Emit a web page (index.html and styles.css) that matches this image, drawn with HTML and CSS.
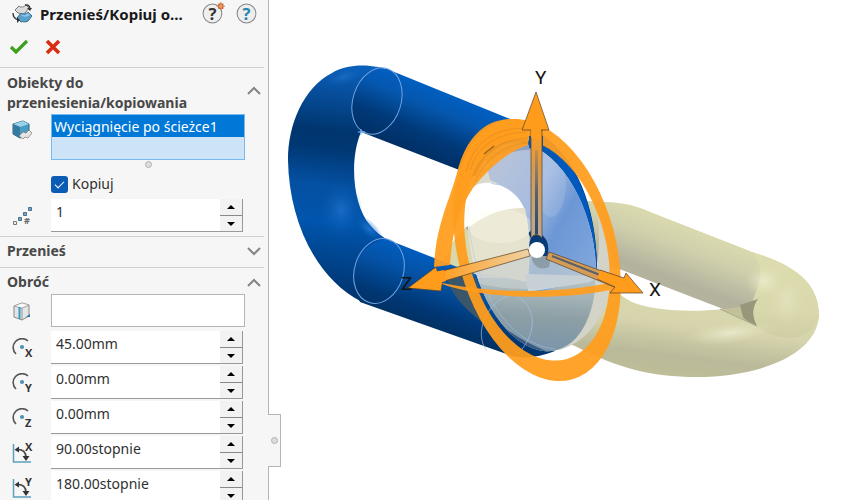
FILE: index.html
```
<!DOCTYPE html>
<html lang="pl">
<head>
<meta charset="utf-8">
<meta name="viewport" content="width=device-width, initial-scale=1">
<title>Przenieś/Kopiuj obiekty</title>
<link rel="stylesheet" href="styles.css">
</head>
<body>
<svg width="0" height="0" class="defs" aria-hidden="true">
  <symbol id="up" viewBox="0 0 10 6"><path d="M1 5L5 1l4 4z"/></symbol>
  <symbol id="down" viewBox="0 0 10 6"><path d="M1 1l4 4 4-4z"/></symbol>
  <symbol id="chevron" viewBox="0 0 14 9"><path d="M1 8l6-6 6 6" fill="none" stroke="#858585" stroke-width="2"/></symbol>
  <symbol id="arc" viewBox="0 0 20 20">
    <path d="M4 16A8 8 0 0 1 16 3" fill="none" stroke="#555" stroke-width="1.6"/>
    <circle cx="10" cy="9" r="2.1" fill="#4e90b6"/>
  </symbol>
  <symbol id="angle" viewBox="0 0 20 20">
    <path d="M1.5 1v18H19" fill="none" stroke="#5c9fc0" stroke-width="1.5"/>
    <path d="M5 6.5c6-.6 9 3 9 8" fill="none" stroke="#444" stroke-width="1.6"/>
    <path d="M2.5 6.7L7 3.5v6zM10.500 13h7L14 18z" fill="#333"/>
  </symbol>
</svg>
<div class="app">
  <aside class="panel">
    <header class="title-row">
      <svg class="icon" viewBox="0 0 20 20">
        <path d="M3 6l4-4c2 2 5 1 7-1l3 3-4 5c-3 2-5 0-7 0z" fill="#dcdcdc" stroke="#777"/>
        <path d="M5 14l4-5c2 2 5 1 7-1l4 4-4 5c-3 2-5 0-7 1z" fill="#58a1cd" stroke="#39708f"/>
        <path d="M9 10c3 2 5 1 7-1l2 2c-3 2-5 2-8 1z" fill="#8ac5e5"/>
        <path d="M13 1q4-1 5 3M1 9q0 5 5 7" fill="none" stroke="#333" stroke-width="1.300"/>
        <path d="M15 4h5l-2 3zM5 13v6l3-3z" fill="#333"/>
      </svg>
      <h1>Przenieś/Kopiuj o...</h1>
      <button class="help" aria-label="Co nowego">
        <svg viewBox="0 0 22 22"><circle cx="10" cy="11" r="9" fill="#efefef" stroke="#888"/><text x="10" y="17" class="mark">?</text><rect x="16" y="2" width="4" height="4" fill="#eda06d" stroke="#bd5a22"/><path d="M18 0v2m0 4v2m-4-4h2m4 0h2" stroke="#d68453"/></svg>
      </button>
      <button class="help" aria-label="Pomoc">
        <svg viewBox="0 0 22 22"><circle cx="11" cy="11" r="9" fill="#eee" stroke="#888"/><text x="11" y="17" class="mark blue">?</text></svg>
      </button>
    </header>
    <div class="actions">
      <button aria-label="OK"><svg viewBox="0 0 20 16"><path d="M2 8l5 5L18 2" fill="none" stroke="#3d9f1d" stroke-width="3.200"/></svg></button>
      <button aria-label="Anuluj"><svg viewBox="0 0 20 16"><path d="M4 2l12 12M16 2L4 14" fill="none" stroke="#d92c10" stroke-width="3.600"/></svg></button>
    </div>

    <section>
      <button class="section-head tall"><span>Obiekty do przeniesienia/kopiowania</span><svg><use href="#chevron"/></svg></button>
      <div class="field top">
        <svg class="icon" viewBox="0 0 20 20">
          <path d="M1 4l10-3 6 3v10l-9 4-7-4z" fill="#4b9cc2" stroke="#2d6480"/>
          <path d="M1 4l10-3 6 3-9 3z" fill="#9bd2eb"/><path d="M1 4l7 3v11l-7-4z" fill="#3479a0"/>
          <path d="M7 16l4-4 3 1 3-3 3 3-4 5-3-1-2 2z" fill="#e5e5e5" stroke="#777" stroke-width=".7"/>
        </svg>
        <div class="list-wrap">
          <select class="list" size="2" aria-label="Obiekty do przeniesienia"><option selected>Wyciągnięcie po ścieżce1</option></select>
          <i class="grip"></i>
        </div>
      </div>
      <label class="check"><input type="checkbox" checked>Kopiuj</label>
      <div class="field count">
        <svg class="icon" viewBox="0 0 20 20">
          <path d="M1.500 15.500h3v3h-3z" fill="#eee" stroke="#777"/>
          <path d="M6.500 11.500h3v3h-3zM11.500 6.500h3v3h-3zM16.500 1.500h3v3h-3z" fill="#6ba8c7" stroke="#4c7188"/>
          <text x="12" y="18" class="hash">#</text>
        </svg>
        <div class="spin"><input value="1" aria-label="Liczba kopii"><button aria-label="Więcej"><svg><use href="#up"/></svg></button><button aria-label="Mniej"><svg><use href="#down"/></svg></button></div>
      </div>
    </section>

    <section><button class="section-head"><span>Przenieś</span><svg class="closed"><use href="#chevron"/></svg></button></section>

    <section>
      <button class="section-head"><span>Obróć</span><svg><use href="#chevron"/></svg></button>
      <div class="rows">
        <div class="field">
          <svg class="icon" viewBox="0 0 20 20">
            <path d="M2 4l8-3 7 2v11l-7 4-8-3z" fill="#e5e5e5" stroke="#888"/><path d="M2 4l8 2 7-3M10 6v12" fill="none" stroke="#999"/><path d="M2 4l8-3 7 2-7 3z" fill="#fafafa" stroke="#999" stroke-width=".6"/>
            <path d="M7.500 5v12" stroke="#369ac4" stroke-width="2"/><path d="M14 15h4v-3z" fill="#257ba4"/>
          </svg>
          <input class="box" aria-label="Oś obrotu">
        </div>
        <div class="field">
          <svg class="icon" viewBox="0 0 20 20"><use href="#arc"/><text x="13" y="19" class="axis">X</text></svg>
          <div class="spin"><input value="45.00mm" aria-label="Początek X"><button aria-label="Więcej"><svg><use href="#up"/></svg></button><button aria-label="Mniej"><svg><use href="#down"/></svg></button></div>
        </div>
        <div class="field">
          <svg class="icon" viewBox="0 0 20 20"><use href="#arc"/><text x="13" y="19" class="axis">Y</text></svg>
          <div class="spin"><input value="0.00mm" aria-label="Początek Y"><button aria-label="Więcej"><svg><use href="#up"/></svg></button><button aria-label="Mniej"><svg><use href="#down"/></svg></button></div>
        </div>
        <div class="field">
          <svg class="icon" viewBox="0 0 20 20"><use href="#arc"/><text x="13" y="19" class="axis">Z</text></svg>
          <div class="spin"><input value="0.00mm" aria-label="Początek Z"><button aria-label="Więcej"><svg><use href="#up"/></svg></button><button aria-label="Mniej"><svg><use href="#down"/></svg></button></div>
        </div>
        <div class="field">
          <svg class="icon" viewBox="0 0 20 20"><use href="#angle"/><text x="13" y="8" class="axis">X</text></svg>
          <div class="spin"><input value="90.00stopnie" aria-label="Kąt X"><button aria-label="Więcej"><svg><use href="#up"/></svg></button><button aria-label="Mniej"><svg><use href="#down"/></svg></button></div>
        </div>
        <div class="field">
          <svg class="icon" viewBox="0 0 20 20"><use href="#angle"/><text x="13" y="8" class="axis">Y</text></svg>
          <div class="spin"><input value="180.00stopnie" aria-label="Kąt Y"><button aria-label="Więcej"><svg><use href="#up"/></svg></button><button aria-label="Mniej"><svg><use href="#down"/></svg></button></div>
        </div>
      </div>
    </section>
  </aside>
  <main class="view">
    <button class="tab" aria-label="Zwiń panel"><i class="grip"></i></button>
    <svg class="scene" viewBox="269 0 591 500" preserveAspectRatio="xMinYMin meet" role="img" aria-label="Ogniwa łańcucha z osiami obrotu">
      <defs>
        <linearGradient id="tube" gradientUnits="userSpaceOnUse" x1="440" y1="87" x2="412" y2="155">
          <stop offset="0" stop-color="#0060c4"/><stop offset=".3" stop-color="#0557ae"/><stop offset=".65" stop-color="#003a7a"/><stop offset="1" stop-color="#002e62"/>
        </linearGradient>
        <linearGradient id="tube2" gradientUnits="userSpaceOnUse" x1="425" y1="248" x2="400" y2="320">
          <stop offset="0" stop-color="#0060c4"/><stop offset=".35" stop-color="#0452a6"/><stop offset=".75" stop-color="#003774"/><stop offset="1" stop-color="#003060"/>
        </linearGradient>
        <linearGradient id="bend" gradientUnits="userSpaceOnUse" x1="350" y1="64" x2="325" y2="290">
          <stop offset="0" stop-color="#0a61bd"/><stop offset=".12" stop-color="#07509f"/><stop offset=".3" stop-color="#00366f"/><stop offset=".38" stop-color="#003874"/><stop offset=".54" stop-color="#0450a2"/><stop offset=".7" stop-color="#0055ad"/><stop offset="1" stop-color="#003672"/>
        </linearGradient>
        <linearGradient id="face" gradientUnits="userSpaceOnUse" x1="490" y1="190" x2="600" y2="250">
          <stop offset="0" stop-color="#b5c2da"/><stop offset=".35" stop-color="#a7bce0"/><stop offset=".62" stop-color="#6b97d5"/><stop offset="1" stop-color="#7fa5dc"/>
        </linearGradient>
        <linearGradient id="cream" gradientUnits="userSpaceOnUse" x1="700" y1="225" x2="672" y2="300">
          <stop offset="0" stop-color="#dddcae"/><stop offset=".35" stop-color="#cfcfac"/><stop offset=".75" stop-color="#b3b29e"/><stop offset="1" stop-color="#b5b49a"/>
        </linearGradient>
        <linearGradient id="cream2" gradientUnits="userSpaceOnUse" x1="700" y1="300" x2="690" y2="378">
          <stop offset="0" stop-color="#d9d8ac"/><stop offset=".35" stop-color="#d5d4ac"/><stop offset=".75" stop-color="#bab99a"/><stop offset="1" stop-color="#bebd98"/>
        </linearGradient>
        <linearGradient id="creamBend" gradientUnits="userSpaceOnUse" x1="790" y1="262" x2="785" y2="352">
          <stop offset="0" stop-color="#dddcae"/><stop offset=".55" stop-color="#d9d8ac"/><stop offset="1" stop-color="#c8c7a0"/>
        </linearGradient>
        <linearGradient id="low" gradientUnits="userSpaceOnUse" x1="540" y1="280" x2="535" y2="355"><stop offset="0" stop-color="#b3c0c2"/><stop offset=".5" stop-color="#8c9fa5"/><stop offset="1" stop-color="#7793aa"/></linearGradient>
        <radialGradient id="blueGlow"><stop offset="0" stop-color="#287dd8" stop-opacity=".75"/><stop offset="1" stop-color="#075bb3" stop-opacity="0"/></radialGradient>
        <radialGradient id="creamGlow"><stop offset="0" stop-color="#f0f0d8" stop-opacity=".9"/><stop offset="1" stop-color="#e4e3b8" stop-opacity="0"/></radialGradient>
        <linearGradient id="shaft" x1="0" x2="1" y1="0" y2="0"><stop offset="0" stop-color="#ff9c1c"/><stop offset="1" stop-color="#efd2a5"/></linearGradient>
        <linearGradient id="post" x1="0" x2="0" y1="0" y2="1"><stop offset="0" stop-color="#ff9c1c"/><stop offset=".35" stop-color="#d59a50"/><stop offset="1" stop-color="#b9aa92"/></linearGradient>
        <linearGradient id="core" x1="0" x2="0" y1="0" y2="1"><stop offset="0" stop-color="#7f7059" stop-opacity=".3"/><stop offset=".5" stop-color="#5a626c"/><stop offset="1" stop-color="#2c4668"/></linearGradient>
        <clipPath id="discClip"><ellipse cx="532" cy="247" rx="61" ry="106" transform="rotate(-13 532 247)"/></clipPath>
      </defs>

      <!-- cream link -->
      <path d="M445 275C438 235 490 203 540 202C570 199 620 200 650 212L752 252C800 266 819 286 819 316C816 357 755 377 697 377C650 377 618 368 575 346L480 310Z" fill="url(#cream2)"/>
      <path d="M465 228C490 210 540 201 604 202C625 202 640 207 652 213L752 252C778 262 765 276 757 296L752 305C742 309 733 310 720 309L622 272L500 262Z" fill="url(#cream)"/>
      <path d="M752 252C800 267 819 286 819 316C812 345 774 341 757 326C750 315 755 305 752 303C758 285 767 268 752 252Z" fill="url(#creamBend)"/>
      <ellipse cx="764" cy="281" rx="19" ry="16" fill="url(#creamGlow)" opacity=".8"/>
      <ellipse cx="730" cy="333" rx="45" ry="11" fill="url(#creamGlow)" opacity=".8" transform="rotate(-7 730 333)"/>
      <ellipse cx="787" cy="300" rx="18" ry="25" fill="url(#creamGlow)" opacity=".4"/>
      <path d="M590 260L622 270L723 309C690 313 650 310 632 302C612 292 602 276 590 260Z" fill="#fff"/>
      <path d="M720 309Q745 309 759 298Q748 310 757 326Z" fill="#c2c19a"/>
      <path d="M740 305L758 299Q749 311 757 326Q746 321 743 317Z" fill="#98977c"/>
      <path d="M720 309L757 326" stroke="#aaa98c" fill="none"/>

      <!-- blue link -->
      <path fill="url(#bend)" d="M391 71C377 65 350 62 332 73C303 88 288 125 288 160C289 220 315 278 362 302L384 303L390 241C382 237 376 232 370 225C353 206 349 160 361 132L404 130Z"/>
      <path d="M387 69L530 127C575 150 598 205 597 275L529 280C532 235 520 192 493 183L361 132C343 107 352 72 387 69Z" fill="url(#tube)"/>
      <path d="M386 239L480 276L555 351C540 357 525 359 512 356L360 302C346 275 357 244 386 239Z" fill="url(#tube2)"/>
      <path d="M545 139C578 164 597 210 597 273C583 255 574 180 545 139Z" fill="#0059bd"/>
      <ellipse cx="341" cy="210" rx="22" ry="29" fill="url(#blueGlow)" opacity=".8"/>
      <ellipse cx="344" cy="77" rx="24" ry="9" fill="url(#blueGlow)" opacity=".65" transform="rotate(-16 344 77)"/>
      <ellipse cx="369" cy="229" rx="18" ry="8" fill="url(#blueGlow)" transform="rotate(43 369 229)"/>
      <g fill="none" stroke="#6fa4e4" stroke-width="1">
        <ellipse cx="377" cy="101" rx="24" ry="34" transform="rotate(18 377 101)"/>
        <ellipse cx="379" cy="271" rx="24.500" ry="33" transform="rotate(17 379 271)"/>
      </g>
      <path d="M361 129v6m-3-3h7" stroke="#85bfff" fill="none"/>

      <!-- translucent overlap -->
      <path d="M445 272L476 278L492 330C462 307 451 296 445 272Z" fill="#39566a"/>
      <path d="M598 214C621 257 618 330 560 350L542 350C582 340 604 284 598 214Z" fill="#d3d3c8"/>
      <g clip-path="url(#discClip)">
        <path d="M450 130H610V370H450Z" fill="#d9dad0"/>
        <path d="M455 278L595 278L605 375H480Z" fill="url(#low)"/>
        <path d="M472 290C488 321 515 339 560 357L490 370Z" fill="#254a78" opacity=".8"/>
        <path d="M480 135H600V278L527 294C534 239 522 191 490 180Z" fill="url(#face)"/>
        <path d="M480 165Q508 147 548 150L540 139L480 135Z" fill="#617b9f" opacity=".45"/>
        <ellipse cx="551" cy="184" rx="15" ry="33" fill="#b6cdec" opacity=".25"/>
        <path d="M455 245C464 219 501 206 525 208C531 237 532 260 526 282L500 276L460 270Z" fill="#e5e3ce"/>
        <path d="M455 240C451 200 466 181 493 183C510 187 520 198 524 208C500 208 480 215 455 240Z" fill="#fff"/>
        <ellipse cx="500" cy="226" rx="32" ry="17" fill="#fffef0" opacity=".3"/>
        <path d="M525 274L600 276L590 282L528 292Z" fill="#c7d5df"/>
        <path d="M458 267L528 254L594 272L594 280Q520 299 460 278Z" fill="#c8d0cf" opacity=".65"/>
      </g>
      <g fill="none" stroke="#a7c5e6">
        <path d="M487 351C473 334 486 300 514 294C535 304 540 330 518 354" opacity=".65"/>
        <path d="M491 183C508 190 527 173 528 156" opacity=".8"/>
        <path d="M469 226C477 296 511 344 555 349" opacity=".5"/>
      </g>

      <!-- rotation rings -->
      <g fill="#ff9d1e" fill-opacity=".94">
        <path d="M434 267C436 225 448 205 457 173C466 137 485 119 512 119Q520 119 530 124L528 145C504 153 485 173 473 188C459 209 452 231 450 265Z"/>
        <path fill-rule="evenodd" transform="rotate(-15 537 250)" d="M458 250a79 134 0 1 1 158 0a79 134 0 1 1 -158 0ZM468 250a69 113 0 1 0 138 0a69 113 0 1 0 -138 0Z"/>
        <path d="M435 281C480 293 558 295 613 282L609 290C570 299 490 301 442 284Z"/>
      </g>
      <g fill="none" stroke="#cf841f" stroke-width=".7" opacity=".65">
        <path d="M466 172Q477 128 525 128M470 170Q482 133 527 132M472 177Q486 140 528 138M475 181Q492 146 527 143"/>
        <path d="M484 154L494 146" stroke="#564321" stroke-width="1.200"/>
      </g>

      <!-- axes -->
      <path d="M529 136H532V148H529ZM540 136H543V148H540Z" fill="#0757b0"/>
      <path d="M531 238C525 230 532 230 539 233Q550 239 548 253Q545 264 535 259Q526 249 531 238Z" fill="#083a76"/>
      <path d="M532 260Q537 272 549 267L551 256L532 256Z" fill="#8c9da7"/>
      <g stroke="#57412a" stroke-width=".7">
        <path d="M531 130H542V238Q536 231 531 238Z" fill="url(#post)"/>
        <path d="M535 150H538V234H535Z" fill="url(#core)" stroke="none"/>
        <path d="M536 92L549 130H522Z" fill="#ff9c1c"/>
        <path d="M531 128H541V138H531Z" fill="#ff9c1c" stroke="none"/>
        <path d="M438 272L528 249L530 256L441 282Z" fill="url(#shaft)"/>
        <path d="M408 288L436 267L438 273L444 273L441 291Z" fill="#ff9c1c"/>
        <path d="M549 252L624 279L619 289L546 259Z" fill="#d49c54"/>
        <path d="M552 256L600 275" stroke="#58616a" stroke-width="2"/>
        <path d="M600 270L624 278L626 273L643 293H610L615 287L597 279Z" fill="#ff9c1c" stroke="none"/>
        <path d="M600 270L624 278L626 273L643 293H610L615 287L597 279" fill="none"/>
      </g>
      <path d="M434 272L444 270L446 281L436 284Z" fill="#ff9c1c"/>
      <circle cx="537" cy="250" r="8" fill="#fff"/>
      <g class="axis-label"><text x="535" y="84">Y</text><text x="649" y="296">X</text><text x="401" y="290">Z</text></g>
    </svg>
  </main>
</div>
</body>
</html>
```
FILE: styles.css
```
* { box-sizing: border-box; }
body {
  margin: 0;
  overflow: hidden;
  background: #fff;
  color: #303030;
  font: 14px/20px "Noto Sans", "Open Sans", sans-serif;
}
button { padding: 0; border: 0; background: none; font: inherit; color: inherit; }
svg { display: block; }
.defs { position: absolute; }
.app { display: grid; grid-template-columns: 269px 1fr; height: 100vh; }
.panel { overflow: hidden; background: #f6f6f6; border-right: 1px solid #b5b5b5; }
.title-row { display: flex; align-items: center; height: 27px; padding-left: 12px; }
.icon { width: 20px; height: 20px; flex: none; overflow: visible; }
.title-row h1 { flex: 1; margin: 0 0 0 8px; color: #191919; font-size: 15px; line-height: 20px; white-space: nowrap; }
.help { margin-right: 10px; }
.help svg { width: 23px; height: 23px; }
.mark { font: bold 16px "Open Sans", sans-serif; text-anchor: middle; fill: #333; }
.mark.blue { fill: #2786ae; }
.actions { display: flex; gap: 14px; align-items: center; height: 40px; padding-left: 9px; }
.actions svg { width: 20px; height: 16px; }
section { margin-right: 4px; padding-bottom: 4px; border-top: 1px solid #cecece; }
.section-head {
  display: flex;
  align-items: center;
  justify-content: space-between;
  width: 100%;
  min-height: 26px;
  padding: 2px 3px 0 7px;
  color: #484848;
  font-weight: bold;
  text-align: left;
}
.section-head svg { width: 14px; height: 9px; }
.section-head.tall { padding-top: 5px; padding-bottom: 1px; }
.tall span { max-width: 190px; }
.tall svg { margin-bottom: 6px; }
.closed { transform: rotate(180deg); }
.field { display: grid; grid-template-columns: 20px 1fr; column-gap: 19px; align-items: center; padding: 0 19px 0 12px; }
.field.top { align-items: start; }
.top .icon { margin-top: 6px; }
.list-wrap { display: grid; justify-items: center; row-gap: 1px; }
.list {
  width: 100%;
  height: 46px;
  padding: 0;
  overflow: hidden;
  border: 1px solid #79b9ed;
  border-radius: 0;
  outline: 0;
  background: #cde3f7;
  font: inherit;
}
.list option { min-height: 22px; padding: 2px 2px 0; color: #fff; }
.list option:checked { background: #0078d7 linear-gradient(#0078d7, #0078d7); color: #fff; }
.grip { width: 7px; height: 7px; border: 1px solid #b1b1b1; border-radius: 50%; background: #ddd; }
.check { display: flex; align-items: center; gap: 4px; margin: 6px 0 5px 51px; }
.check input {
  appearance: none;
  width: 17px;
  height: 17px;
  margin: 0;
  border-radius: 3px;
  background: #0b5cb5;
  display: grid;
  place-items: center;
}
.check input::after { content: ""; width: 8px; height: 4px; border: solid #fff; border-width: 0 0 1px 1px; transform: translateY(-1px) rotate(-45deg); }
.spin {
  display: grid;
  grid-template: 16px 16px / 1fr 22px;
  margin-right: 2px;
  border-right: 1px solid #999;
  border-bottom: 1px solid #999;
  background: #fff;
}
.spin input { grid-row: span 2; min-width: 0; padding: 0 5px 6px; border: 0; outline: 0; background: #fff; color: #303030; font: inherit; }
.spin button { display: grid; place-items: center; background: #f2f2f2; }
.spin button + button { border-top: 1px solid #888; }
.spin svg { width: 10px; height: 6px; fill: #000; }
.rows { display: grid; row-gap: 2px; }
.box { width: 100%; height: 33px; border: 1px solid #b4b4bb; background: #fff; }
.rows .box { margin-bottom: 2px; }
.axis { font: bold 11px "Open Sans", sans-serif; fill: #333; }
.hash { font: bold 9px "Open Sans", sans-serif; fill: #666; }
.view { position: relative; min-width: 0; }
.scene { width: 100%; height: auto; }
.tab {
  position: absolute;
  left: -1px;
  top: 414px;
  display: grid;
  place-items: center;
  width: 13px;
  height: 53px;
  border: 1px solid #b5b5b5;
  border-left: 0;
  background: #f6f6f6;
}
.axis-label { font: 19px Roboto, sans-serif; fill: #151515; }
```
